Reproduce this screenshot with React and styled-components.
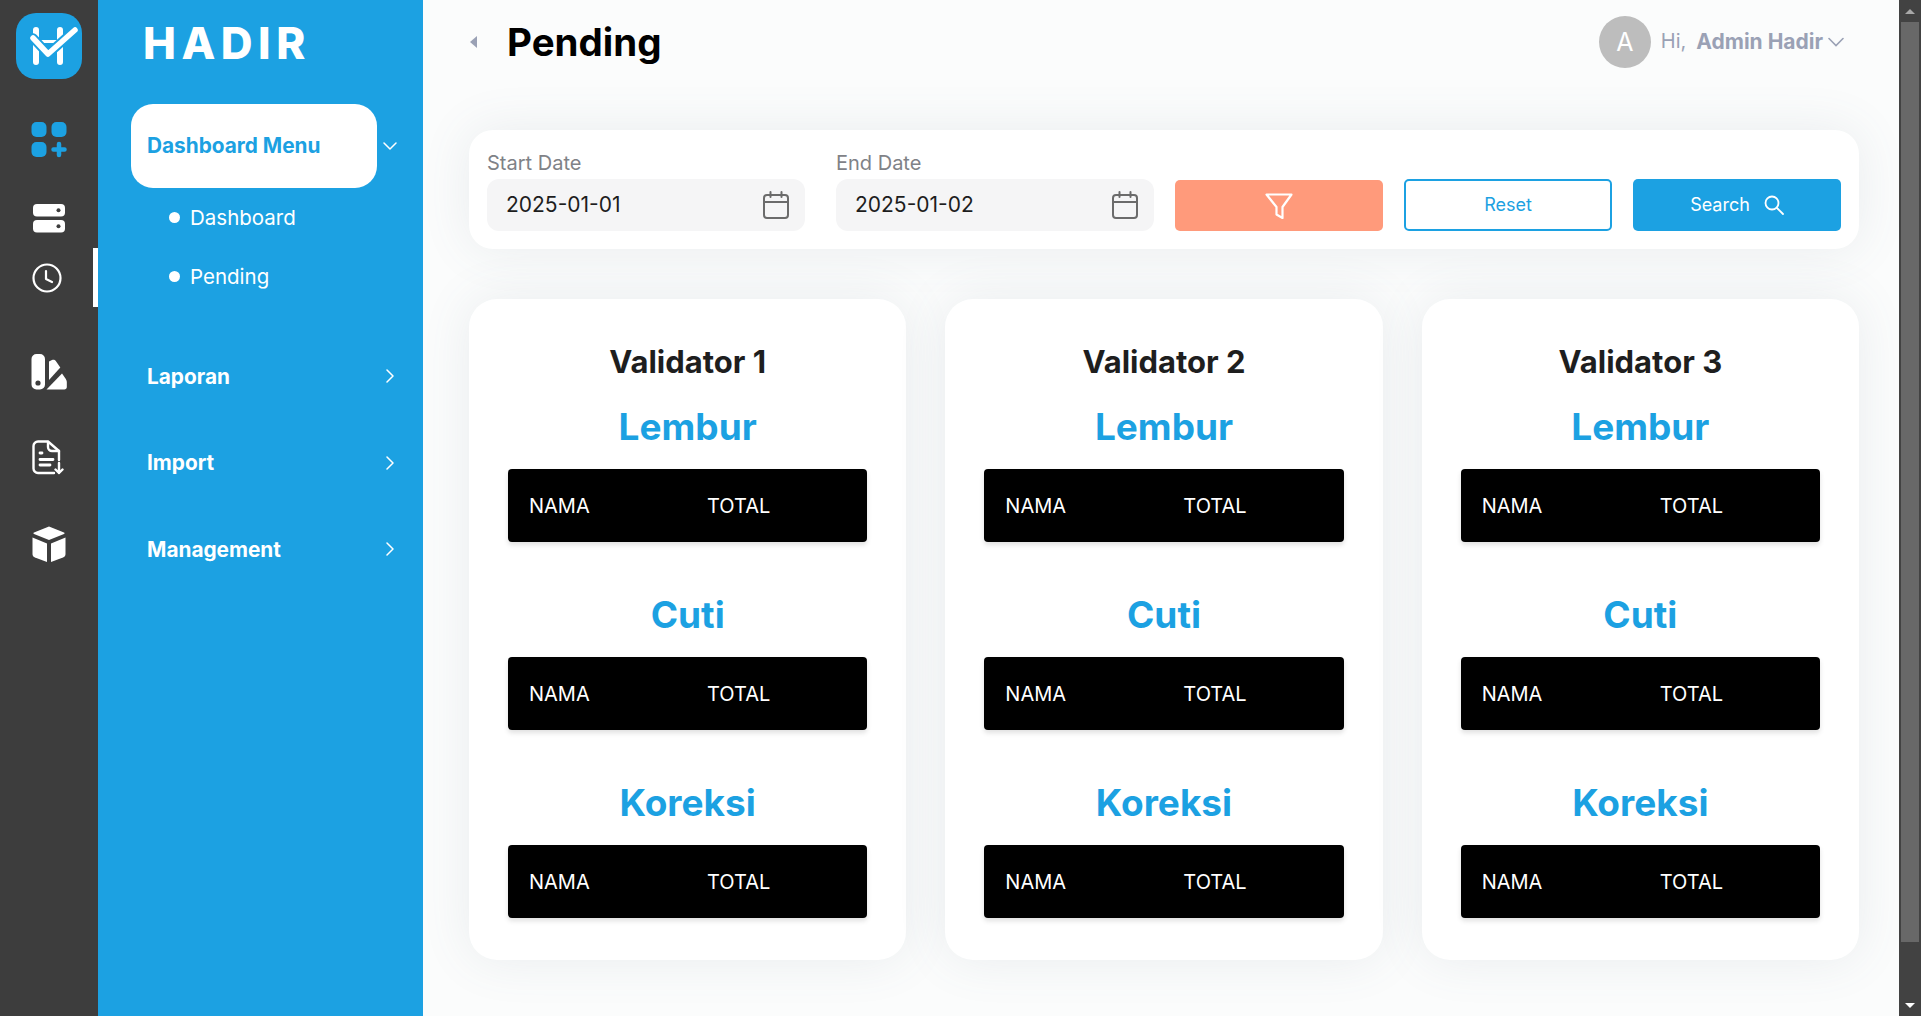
import React from 'react';
import styled, { createGlobalStyle } from 'styled-components';

const BLUE = '#1ca1e2';

const Global = createGlobalStyle`
  html, body { margin: 0; padding: 0; height: 100%; overflow: hidden; }
  body { font-family: Inter, "Open Sans", sans-serif; background: #fbfcfc; }
  #root { height: 100%; }
  * { box-sizing: border-box; }
`;

function LogoMark() {
  return (
    <svg width="66" height="66" viewBox="0 0 66 66">
      <rect width="66" height="66" rx="20" fill={BLUE} />
      <path d="M20 17V49M44 17V49" stroke="#fff" strokeWidth="6" strokeLinecap="round" fill="none" />
      <path d="M20 28.500H44" stroke="#fff" strokeWidth="3" fill="none" />
      <path d="M17 25L32 41L59 17" stroke={BLUE} strokeWidth="9.500" strokeLinecap="round" strokeLinejoin="round" fill="none" />
      <path d="M17 25L32 41L59 17" stroke="#fff" strokeWidth="5.500" strokeLinecap="round" strokeLinejoin="round" fill="none" />
    </svg>
  );
}

function GridPlusIcon() {
  return (
    <svg width="36" height="36" viewBox="0 0 36 36" fill={BLUE}>
      <rect x="0.500" y="0" width="15" height="15" rx="5" />
      <rect x="20.500" y="0" width="15" height="15" rx="5" />
      <rect x="0.500" y="20" width="15" height="15" rx="5" />
      <path d="M28 22v11M22.500 27.500h11" stroke={BLUE} strokeWidth="4.500" strokeLinecap="round" />
    </svg>
  );
}

function ServerIcon() {
  return (
    <svg width="32" height="29" viewBox="0 0 32 29">
      <rect width="32" height="12.500" rx="4" fill="#fff" />
      <rect y="16" width="32" height="12.500" rx="4" fill="#fff" />
      <circle cx="25.500" cy="6.200" r="2" fill="#3d3d3d" />
      <circle cx="25.500" cy="22.200" r="2" fill="#3d3d3d" />
    </svg>
  );
}

function ClockIcon() {
  return (
    <svg width="30" height="30" viewBox="0 0 30 30" fill="none" stroke="#fff" strokeLinecap="round" strokeLinejoin="round">
      <circle cx="15" cy="15" r="13.500" strokeWidth="2.200" />
      <path d="M14 8v8l6 3" strokeWidth="2.200" />
    </svg>
  );
}

function PaletteIcon() {
  return (
    <svg width="36" height="36" viewBox="0 0 36 36" fill="#fff">
      <path d="M0.500 5a5 5 0 0 1 5-5h3.500a5 5 0 0 1 5 5v25.500a5 5 0 0 1-5 5h-3.500a5 5 0 0 1-5-5z" />
      <circle cx="7" cy="29" r="2.600" fill="#3d3d3d" />
      <path d="M18 26V7.500l3-1.500c1.500-.7 3 0 3.800 1l4.500 6.500-11.300 12.500z" />
      <path d="M15.500 35.500L31 19.500l3.800 5.500c.6 1 1 2 1 3v5c0 1.500-1 2.500-2.500 2.500z" />
    </svg>
  );
}

function DocIcon() {
  return (
    <svg width="32" height="35" viewBox="0 0 32 35" fill="none" stroke="#fff" strokeWidth="2.400" strokeLinecap="round" strokeLinejoin="round">
      <path d="M22 33H6a4.500 4.500 0 0 1-4.500-4.500V6A4.500 4.500 0 0 1 6 1.500h10L27 11v9" />
      <path d="M16 2v5a4 4 0 0 0 4 4h7" />
      <path d="M8 13h2M8 19.500h13M8 25h10" strokeWidth="2.800" />
      <path d="M27 23v10M23.500 29.500L27 33l3.500-3.500" />
    </svg>
  );
}

function BoxIcon() {
  return (
    <svg width="34" height="37" viewBox="0 0 34 37" fill="#fff">
      <path d="M17 0.500L32 6.500a.8.800 0 0 1 0 1.500L17 14 2 8a.8.800 0 0 1 0-1.500z" />
      <path d="M0.500 11.500L15 17.500V36L3 31.500c-1.500-.6-2.500-1.800-2.500-3.500z" />
      <path d="M33.500 11.500L19 17.500V36l12-4.500c1.500-.6 2.500-1.800 2.500-3.500z" />
    </svg>
  );
}

function Chevron({ dir }) {
  const d = dir === 'down' ? 'M1 4l6 6 6-6' : 'M4 1l6 6-6 6';
  return (
    <svg width="14" height="14" viewBox="0 0 14 14" fill="none" stroke="#fff" strokeWidth="1.500" strokeLinecap="round" strokeLinejoin="round">
      <path d={d} />
    </svg>
  );
}

function CalendarIcon() {
  return (
    <svg width="26" height="28" viewBox="0 0 26 28" fill="none" stroke="#6b6b6b" strokeWidth="2" strokeLinecap="round">
      <rect x="1" y="4" width="24" height="23" rx="3" />
      <path d="M1 11h24M7.500 1v5M18.500 1v5" />
    </svg>
  );
}

function FunnelIcon() {
  return (
    <svg width="28" height="26" viewBox="0 0 28 26" fill="none" stroke="#fff" strokeWidth="2.200" strokeLinejoin="round">
      <path d="M1.500 1.500h25L17.500 14V25l-6-3.500V14z" />
    </svg>
  );
}

function SearchIcon() {
  return (
    <svg width="20" height="20" viewBox="0 0 20 20" fill="none" stroke="#fff" strokeWidth="1.800" strokeLinecap="round">
      <circle cx="8" cy="8" r="6.500" />
      <path d="M13 13l6 6" />
    </svg>
  );
}

const sections = ['Lembur', 'Cuti', 'Koreksi'];
const validators = ['Validator 1', 'Validator 2', 'Validator 3'];
const railItems = [
  { icon: <GridPlusIcon />, h: 96 },
  { icon: <ServerIcon />, h: 60 },
  { icon: <ClockIcon />, h: 59, active: true, dx: 4 },
  { icon: <PaletteIcon />, h: 86, mt: 22 },
  { icon: <DocIcon />, h: 85, dx: 2 },
  { icon: <BoxIcon />, h: 88 },
];
const menus = ['Laporan', 'Import', 'Management'];

export default function App() {
  return (
    <Page>
      <Global />
      <Rail>
        <RailLogo><LogoMark /></RailLogo>
        {railItems.map((r, i) => (
          <RailItem key={i} $h={r.h} $mt={r.mt} $dx={r.dx} $active={r.active}>{r.icon}</RailItem>
        ))}
      </Rail>
      <Sidebar>
        <Brand>HADIR</Brand>
        <ActiveRow>
          <ActivePill>Dashboard Menu</ActivePill>
          <Chevron dir="down" />
        </ActiveRow>
        <SubItem>Dashboard</SubItem>
        <SubItem>Pending</SubItem>
        <MenuList>
          {menus.map((m) => (
            <MenuRow key={m}>
              {m}
              <Chevron dir="right" />
            </MenuRow>
          ))}
        </MenuList>
      </Sidebar>
      <Main>
        <TopBar>
          <Collapse />
          <Title>Pending</Title>
          <User>
            <Avatar>A</Avatar>
            <Hi>Hi,</Hi>
            <UserName>Admin Hadir</UserName>
            <svg width="16" height="10" viewBox="0 0 16 10" fill="none" stroke="#9aa1b5" strokeWidth="1.600" strokeLinecap="round">
              <path d="M1 1.500l7 7 7-7" />
            </svg>
          </User>
        </TopBar>
        <FilterCard>
          <Field>
            <Label>Start Date</Label>
            <DateBox>2025-01-01<CalendarIcon /></DateBox>
          </Field>
          <Field>
            <Label>End Date</Label>
            <DateBox>2025-01-02<CalendarIcon /></DateBox>
          </Field>
          <FunnelButton><FunnelIcon /></FunnelButton>
          <ResetButton>Reset</ResetButton>
          <SearchButton>Search<SearchIcon /></SearchButton>
        </FilterCard>
        <Cards>
          {validators.map((v) => (
            <Card key={v}>
              <CardTitle>{v}</CardTitle>
              {sections.map((s) => (
                <Section key={s}>
                  <SectionTitle>{s}</SectionTitle>
                  <TableHead>
                    <HeadCell>NAMA</HeadCell>
                    <HeadCell>TOTAL</HeadCell>
                  </TableHead>
                </Section>
              ))}
            </Card>
          ))}
        </Cards>
      </Main>
      <ScrollTrack>
        <ScrollArrow $up />
        <ScrollThumb />
        <ScrollSpace />
        <ScrollArrow />
      </ScrollTrack>
    </Page>
  );
}

const Page = styled.div`
  display: flex;
  height: 1016px;
  overflow: hidden;
`;

const Rail = styled.aside`
  width: 98px;
  flex: none;
  background: #3d3d3d;
  display: flex;
  flex-direction: column;
`;

const RailLogo = styled.div`
  height: 92px;
  padding: 13px 0 0 16px;
`;

const RailItem = styled.div`
  height: ${(p) => p.$h}px;
  margin-top: ${(p) => p.$mt || 0}px;
  padding-left: 5px;
  padding-right: ${(p) => p.$dx || 0}px;
  display: flex;
  align-items: center;
  justify-content: center;
  border-right: 5px solid ${(p) => (p.$active ? '#fff' : 'transparent')};
`;

const Sidebar = styled.nav`
  width: 325px;
  flex: none;
  background: ${BLUE};
  color: #fff;
  padding: 0 26px 0 33px;
`;

const Brand = styled.div`
  height: 104px;
  padding: 16px 0 0 12px;
  font-size: 44px;
  line-height: 54px;
  font-weight: 800;
  letter-spacing: 5.500px;
`;

const ActiveRow = styled.div`
  display: flex;
  align-items: center;
  justify-content: space-between;
`;

const ActivePill = styled.div`
  width: 246px;
  height: 84px;
  padding: 0 0 2px 16px;
  background: #fff;
  border-radius: 22px;
  color: ${BLUE};
  font-size: 20.800px;
  font-weight: 700;
  display: flex;
  align-items: center;
`;

const SubItem = styled.div`
  height: 59px;
  display: flex;
  align-items: center;
  gap: 10px;
  padding-left: 38px;
  font-size: 20.500px;
  &::before {
    content: '';
    width: 11px;
    height: 11px;
    border-radius: 50%;
    background: #fff;
  }
`;

const MenuList = styled.div`
  padding-top: 27px;
`;

const MenuRow = styled.div`
  height: 86.500px;
  padding-left: 16px;
  display: flex;
  align-items: center;
  justify-content: space-between;
  font-size: 20.800px;
  font-weight: 700;
`;

const Main = styled.main`
  flex: 1;
  min-width: 0;
  padding: 0 40px 0 46px;
  background: #fbfcfc;
`;

const TopBar = styled.header`
  height: 130px;
  padding-bottom: 46px;
  display: flex;
  align-items: center;
`;

const Collapse = styled.span`
  width: 0;
  height: 0;
  border-style: solid;
  border-width: 6px 7px 6px 0;
  border-color: transparent #9aa1b5 transparent transparent;
  margin: 0 30px 0 1px;
`;

const Title = styled.h1`
  margin: 0;
  font-size: 38.500px;
  font-weight: 700;
  color: #000;
`;

const User = styled.div`
  margin-left: auto;
  margin-right: 15px;
  display: flex;
  align-items: center;
  font-size: 20px;
`;

const Avatar = styled.div`
  width: 52px;
  height: 52px;
  border-radius: 50%;
  background: #bdbdbd;
  color: #fff;
  font-size: 25px;
  display: flex;
  align-items: center;
  justify-content: center;
  margin-right: 10px;
`;

const Hi = styled.span`
  color: #9aa1b5;
  margin: 0 10px 2px 0;
`;

const UserName = styled.span`
  color: #9aa1b5;
  font-weight: 700;
  font-size: 21px;
  margin: 0 5px 2px 0;
`;

const FilterCard = styled.section`
  height: 119px;
  padding: 20px 18px 0;
  background: #fff;
  border-radius: 24px;
  box-shadow: 0 0 50px rgba(90, 110, 130, 0.11);
  display: grid;
  grid-template-columns: 328px 318px 208px 208px 208px;
  column-gap: 21px;
  margin-bottom: 50px;
`;

const Field = styled.div`
  display: flex;
  flex-direction: column;
  &:first-child {
    margin-right: 10px;
  }
`;

const Label = styled.label`
  height: 29px;
  color: #7f8287;
  font-size: 20px;
  line-height: 26px;
`;

const DateBox = styled.div`
  height: 52px;
  padding: 0 16px 2px 19px;
  background: #f5f5f6;
  border-radius: 12px;
  display: flex;
  align-items: center;
  justify-content: space-between;
  font-size: 21px;
  color: #1d1d1d;
  svg {
    margin-top: 2px;
  }
`;

const ActionButton = styled.button`
  align-self: end;
  height: 52px;
  margin-bottom: 18px;
  padding-bottom: 2px;
  border-radius: 5px;
  font-family: inherit;
  font-size: 18px;
  display: flex;
  align-items: center;
  justify-content: center;
`;

const FunnelButton = styled(ActionButton)`
  height: 51px;
  padding-bottom: 0;
  background: #ff9a7b;
  border: none;
`;

const ResetButton = styled(ActionButton)`
  background: #fff;
  border: 2px solid ${BLUE};
  color: ${BLUE};
`;

const SearchButton = styled(ActionButton)`
  gap: 14px;
  background: ${BLUE};
  border: none;
  color: #fff;
`;

const Cards = styled.div`
  display: grid;
  grid-template-columns: repeat(3, 1fr);
  column-gap: 39px;
`;

const Card = styled.article`
  height: 661px;
  padding: 42px 39px 0;
  background: #fff;
  border-radius: 28px;
  box-shadow: 0 0 50px rgba(90, 110, 130, 0.11);
`;

const CardTitle = styled.h3`
  margin: 0;
  height: 42px;
  font-size: 31px;
  line-height: 42px;
  font-weight: 700;
  text-align: center;
  color: #1e1e1e;
`;

const Section = styled.div`
  height: 188px;
`;

const SectionTitle = styled.h2`
  margin: 0;
  height: 86px;
  padding-top: 21px;
  font-size: 37px;
  line-height: 46px;
  font-weight: 700;
  text-align: center;
  color: ${BLUE};
`;

const TableHead = styled.div`
  height: 73px;
  padding: 0 21px;
  background: #000;
  border-radius: 4px;
  box-shadow: 0 3px 5px rgba(0, 0, 0, 0.12);
  display: grid;
  grid-template-columns: 178px 1fr;
  align-items: center;
`;

const HeadCell = styled.div`
  color: #fff;
  font-size: 20px;
`;

const ScrollTrack = styled.div`
  width: 22px;
  flex: none;
  background: #424242;
  display: flex;
  flex-direction: column;
  align-items: center;
`;

const ScrollArrow = styled.span`
  height: 22px;
  flex: none;
  display: flex;
  align-items: center;
  &::before {
    content: '';
    border-left: 5px solid transparent;
    border-right: 5px solid transparent;
    ${(p) => (p.$up ? 'border-bottom: 5px solid #a8a8a8;' : 'border-top: 5px solid #fff;')}
  }
`;

const ScrollThumb = styled.div`
  width: 18px;
  height: 920px;
  flex: none;
  background: #686868;
`;

const ScrollSpace = styled.div`
  flex: 1;
`;
